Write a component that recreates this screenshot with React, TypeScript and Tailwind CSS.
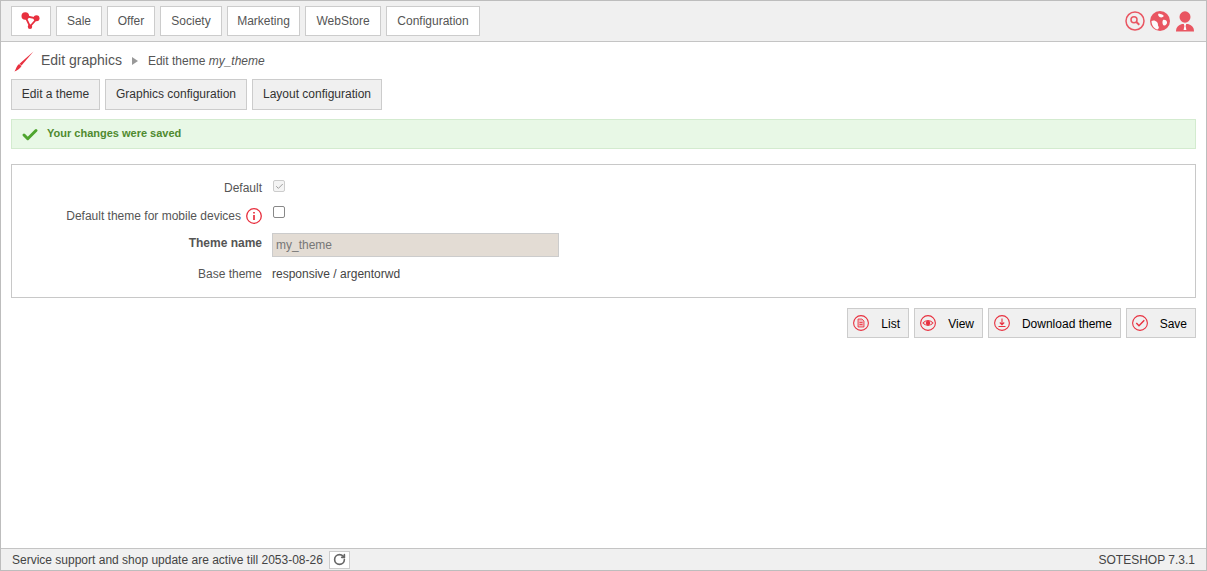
import { Check, RotateCw } from 'lucide-react';

const NAV = [
  { label: 'Sale', width: 'w-[46px]' },
  { label: 'Offer', width: 'w-[48px]' },
  { label: 'Society', width: 'w-[62px]' },
  { label: 'Marketing', width: 'w-[73px]' },
  { label: 'WebStore', width: 'w-[76px]' },
  { label: 'Configuration', width: 'w-[94px]' },
];
const TABS = [
  { label: 'Edit a theme', width: 'w-[89px]' },
  { label: 'Graphics configuration', width: 'w-[142px]' },
  { label: 'Layout configuration', width: 'w-[130px]' },
];
const RED = '#e8303f';

const Ring = ({ children }: { children: React.ReactNode }) => (
  <svg width="16" height="16" viewBox="0 0 16 16" fill="none" stroke={RED} strokeWidth="1.100" className="shrink-0">
    <circle cx="8" cy="8" r="7.400" />
    {children}
  </svg>
);

const ACTIONS = [
  {
    label: 'List',
    width: 'w-[62px]',
    icon: (
      <Ring>
        <path d="M5 4h4l2 2v6H5z" fill="#f3b4b8" strokeWidth="0.800" />
        <path d="M6.500 7.500h3M6.500 9.500h3" strokeWidth="0.800" />
      </Ring>
    ),
  },
  {
    label: 'View',
    width: 'w-[69px]',
    icon: (
      <Ring>
        <path d="M3 8c2.800-3.300 7.200-3.300 10 0-2.800 3.300-7.200 3.300-10 0z" />
        <circle cx="8" cy="8" r="1.700" fill={RED} />
      </Ring>
    ),
  },
  {
    label: 'Download theme',
    width: 'w-[133px]',
    icon: (
      <Ring>
        <path d="M8 3.500v6M5.800 7.500L8 9.700l2.200-2.200M4.500 11.500h7" />
      </Ring>
    ),
  },
  {
    label: 'Save',
    width: 'w-[70px]',
    icon: (
      <Ring>
        <path d="M4.300 8l2.700 2.800 5.300-5.600" strokeWidth="1.400" />
      </Ring>
    ),
  },
];

export default function App() {
  return (
    <div className="h-[571px] w-[1207px] flex flex-col border border-[#bdbdbd] bg-white text-[12px] text-[#444] font-['Liberation_Sans',Arial,sans-serif]">
      <header className="h-[41px] shrink-0 flex items-center justify-between pl-[10px] pr-[11px] bg-[#f0f0f0] border-b border-[#c4c4c4]">
        <nav className="flex gap-[5px]">
          <a className="w-[40px] h-[30px] flex items-center justify-center bg-white border border-[#ccc]">
            <svg width="20" height="18" viewBox="0 0 20 18" fill="none" className="-mt-[1px]">
              <path d="M4 4L16 6.500 9 14.500z" stroke={RED} strokeWidth="1.800" />
              <circle cx="4.300" cy="4" r="3.800" fill={RED} />
              <circle cx="15.500" cy="6.200" r="3" fill={RED} />
              <circle cx="9" cy="14.800" r="2.200" fill={RED} />
            </svg>
          </a>
          {NAV.map((n) => (
            <a key={n.label} className={`h-[30px] flex items-center justify-center bg-white border border-[#ccc] text-[#555] ${n.width}`}>{n.label}</a>
          ))}
        </nav>
        <div className="flex items-center gap-[5px] opacity-80">
          <svg width="20" height="20" viewBox="0 0 20 20" fill="none" stroke={RED} strokeWidth="1.500">
            <circle cx="10" cy="10" r="9" />
            <circle cx="9" cy="8.800" r="3" strokeWidth="1.500" />
            <path d="M11.300 11l3 2.700" strokeWidth="2" />
          </svg>
          <svg width="20" height="20" viewBox="0 0 20 20">
            <circle cx="10" cy="10" r="10" fill={RED} />
            <path d="M1.500 10c2-1 4-.5 5.500 1s.5 3 1.500 4.500-.5 3-1.500 3C4 17.500 1.500 14 1.500 10zM13 9c2-.5 3.500.5 4 2s-1.500 4-3 3.500-2-4-1-5.500zM9 2.500c1.500 1 3.500.5 4.500 2S11 7 9.500 6 7.500 3 9 2.500z" fill="#fff" />
          </svg>
          <svg width="20" height="21" viewBox="0 0 20 21">
            <ellipse cx="10" cy="6" rx="5.500" ry="5.800" fill={RED} />
            <path d="M1 20.500c0-4.500 2.500-6.500 6-7.500h6c3.500 1 6 3 6 7.500z" fill={RED} />
            <path d="M8.800 13h2.400l-.6 2 .8 4h-2.800l.8-4z" fill="#fff" />
          </svg>
        </div>
      </header>

      <main className="flex-1 px-[10px]">
        <div className="h-[37px] flex items-center">
          <svg width="20" height="21" viewBox="0 0 20 21" className="ml-[3px] mr-[7px] mt-[1px]">
            <path d="M19.500 0.500L7.500 14.500 5.500 12.800z" fill={RED} />
            <path d="M5 13l2.500 2c-1.500 2.500-3.800 4.500-7 5.500 1.500-2 1.800-5.500 4.500-7.500z" fill={RED} />
          </svg>
          <span className="text-[14px] text-[#555]">Edit graphics</span>
          <span className="mx-[10px] w-0 h-0 border-y-[4px] border-y-transparent border-l-[6px] border-l-[#999]" />
          <span className="text-[#555]">Edit theme <em>my_theme</em></span>
        </div>

        <div className="flex gap-[5px]">
          {TABS.map((t) => (
            <a key={t.label} className={`h-[31px] pb-[2px] flex items-center justify-center bg-[#f0f0f0] border border-[#ccc] text-[#333] ${t.width}`}>{t.label}</a>
          ))}
        </div>

        <div className="mt-[9px] h-[30px] flex items-center pl-[9px] bg-[#e8f8e6] border border-[#d3ebcf] text-[11px] font-bold text-[#4f8a2f]">
          <Check size={18} strokeWidth={4} className="text-[#4fa52f] mr-[8px] mt-[1px]" />
          <span className="mb-[2px]">Your changes were saved</span>
        </div>

        <section className="mt-[15px] h-[134px] border border-[#c8c8c8] pt-[10px]">
          <div className="h-[26px] flex items-center">
            <span className="w-[250px] text-right text-[#555]">Default</span>
            <span className="ml-[11px] mb-[4px] w-[12px] h-[12px] flex items-center justify-center rounded-[2px] border border-[#ccc] bg-[#f4f4f4]">
              <Check size={9} strokeWidth={2.500} className="text-[#999]" />
            </span>
          </div>
          <div className="h-[27px] flex items-center">
            <span className="w-[250px] mt-[2px] flex justify-end items-center gap-[5px] text-[#555]">
              Default theme for mobile devices
              <svg width="16" height="16" viewBox="0 0 16 16" fill="none" stroke={RED} strokeWidth="1.300">
                <circle cx="8" cy="8" r="7.300" />
                <path d="M8 4v1.500M8 7v5" strokeWidth="1.700" />
              </svg>
            </span>
            <input type="checkbox" className="ml-[11px] mb-[6px] w-[12px] h-[12px] appearance-none rounded-[2px] border border-[#888] bg-white" />
          </div>
          <div className="h-[30px] flex items-center pt-[4px]">
            <span className="w-[250px] text-right font-bold text-[#555] mb-[5px]">Theme name</span>
            <input readOnly value="my_theme" className="ml-[10px] w-[287px] h-[24px] px-[3px] bg-[#e3dcd4] border border-[#ccc] text-[#777] outline-none" />
          </div>
          <div className="h-[30px] flex items-center pt-[2px]">
            <span className="w-[250px] text-right text-[#555]">Base theme</span>
            <span className="ml-[10px] text-[#444]">responsive / argentorwd</span>
          </div>
        </section>

        <div className="mt-[10px] flex justify-end gap-[5px]">
          {ACTIONS.map((a) => (
            <a key={a.label} className={`h-[30px] pl-[5px] pr-[8px] flex items-center justify-between bg-[#f0f0f0] border border-[#ccc] text-black ${a.width}`}>
              {a.icon}
              <span className="pt-[1px]">{a.label}</span>
            </a>
          ))}
        </div>
      </main>

      <footer className="h-[22px] shrink-0 flex items-center justify-between pl-[11px] pr-[11px] bg-[#f0f0f0] border-t border-[#c4c4c4] text-[#444]">
        <div className="flex items-center gap-[6px]">
          <span>Service support and shop update are active till 2053-08-26</span>
          <button className="w-[21px] h-[18px] flex items-center justify-center bg-white border border-[#ccc]">
            <RotateCw size={13} strokeWidth={3} className="text-[#666]" />
          </button>
        </div>
        <span>SOTESHOP 7.3.1</span>
      </footer>
    </div>
  );
}
